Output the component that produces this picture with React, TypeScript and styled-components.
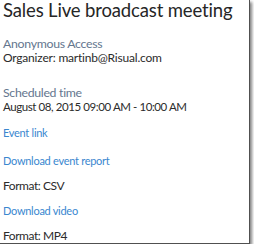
import React from "react";
import styled, { createGlobalStyle } from "styled-components";

const Global = createGlobalStyle`
  html, body { margin: 0; padding: 0; background: #ffffff; }
  body { font-family: Lato, "Open Sans", sans-serif; }
`;

const Panel = styled.div`
  box-sizing: border-box;
  width: 250px;
  height: 244px;
  background: #ffffff;
  border-right: 1px solid #505050;
  border-bottom: 1px solid #505050;
  box-shadow: 2px 2px 3px rgba(0, 0, 0, 0.5);
  padding: 0 0 0 3px;
  display: flex;
  flex-direction: column;
  white-space: nowrap;
`;

const Title = styled.h1`
  margin: 0;
  font-weight: 400;
  font-size: 18.5px;
  line-height: 20px;
  letter-spacing: -0.15px;
  color: #262626;
`;

const Section = styled.div<{ $top: number }>`
  margin-top: ${(p) => p.$top}px;
  display: flex;
  flex-direction: column;
`;

const Heading = styled.div`
  font-size: 12.3px;
  line-height: 15px;
  letter-spacing: -0.3px;
  color: #64768e;
`;

const Text = styled.div<{ $spacing?: number; $size?: number }>`
  font-size: ${(p) => p.$size ?? 12}px;
  line-height: 13px;
  letter-spacing: ${(p) => p.$spacing ?? -0.2}px;
  color: #2b2b2b;
`;

const Link = styled.a`
  font-size: 11px;
  line-height: 13px;
  letter-spacing: -0.28px;
  color: #3a87cf;
  text-decoration: none;
`;

export default function App() {
  return (
    <>
      <Global />
      <Panel>
        <Title>Sales Live broadcast meeting</Title>
        <Section $top={16}>
          <Heading>Anonymous Access</Heading>
          <Text>Organizer: martinb@Risual.com</Text>
        </Section>
        <Section $top={21}>
          <Heading>Scheduled time</Heading>
          <Text $size={11.5} $spacing={-0.42}>
            August 08, 2015 09:00 AM - 10:00 AM
          </Text>
        </Section>
        <Section $top={13}>
          <Link href="#">Event link</Link>
        </Section>
        <Section $top={15}>
          <Link href="#">Download event report</Link>
        </Section>
        <Section $top={12}>
          <Text $spacing={-0.45}>Format: CSV</Text>
        </Section>
        <Section $top={12}>
          <Link href="#">Download video</Link>
        </Section>
        <Section $top={12}>
          <Text $spacing={-0.45}>Format: MP4</Text>
        </Section>
      </Panel>
    </>
  );
}
